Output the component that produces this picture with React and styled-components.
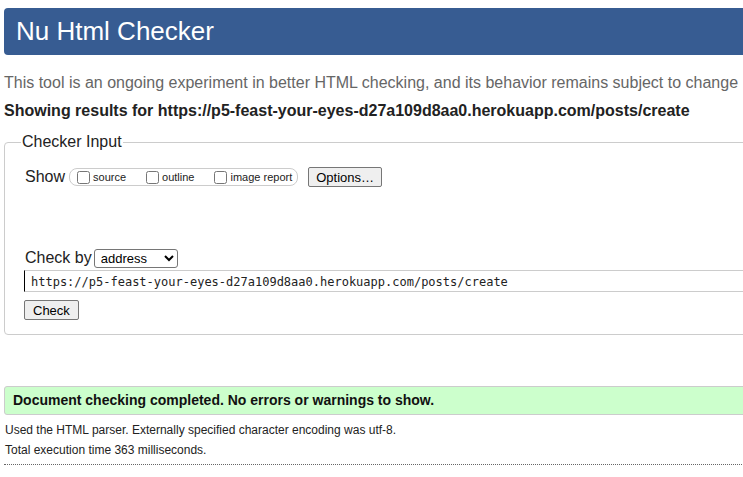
import React from "react";
import styled, { createGlobalStyle } from "styled-components";

const GlobalStyle = createGlobalStyle`
  html, body {
    margin: 0;
    padding: 0;
    overflow: hidden;
    background: #fff;
  }
  body {
    font-family: "Liberation Sans", Arial, sans-serif;
    color: #222;
  }
`;

const Page = styled.div`
  width: 1000px;
  padding: 8px 0 0 4px;
`;

const Header = styled.h1`
  margin: 0;
  height: 47px;
  line-height: 47px;
  padding-left: 12px;
  background: #375c92;
  color: #fff;
  font-size: 26px;
  font-weight: normal;
  border-radius: 4px;
`;

const Intro = styled.p`
  margin: 18px 0 0;
  font-size: 16px;
  line-height: 20px;
  color: #666;
  white-space: nowrap;
`;

const Results = styled.p`
  margin: 8px 0 0;
  font-size: 16px;
  line-height: 20px;
  font-weight: bold;
  color: #222;
  white-space: nowrap;
`;

const Fieldset = styled.fieldset`
  margin: 11px 0 0;
  padding: 14px 20px 14px 20px;
  border: 1px solid #ccc;
  border-radius: 4px;
`;

const Legend = styled.legend`
  margin-left: -4px;
  padding: 0 1px;
  font-size: 16px;
  line-height: 20px;
  color: #222;
`;

const Row = styled.div`
  display: flex;
  align-items: center;
  margin-top: ${(p) => p.top || 0}px;
  font-size: 16px;
  height: ${(p) => p.h || 22}px;
`;

const Pill = styled.span`
  display: inline-flex;
  align-items: center;
  height: 16px;
  margin-left: 4px;
  padding: 0 5px 0 7px;
  border: 1px solid #ccc;
  border-radius: 8px;
`;

const Opt = styled.label`
  display: inline-flex;
  align-items: center;
  font-size: 11px;
  margin-right: ${(p) => p.gap || 0}px;
  input {
    width: 13px;
    height: 13px;
    margin: 0 3px 0 0;
  }
`;

const Button = styled.button`
  font-family: "Liberation Sans", Arial, sans-serif;
  font-size: 13px;
  height: 20px;
  padding: 0 ${(p) => p.px || 8}px;
  color: #000;
  background: #efefef;
  border: 1px solid #767676;
  border-radius: 2px;
  margin-left: ${(p) => p.ml || 0}px;
`;

const Select = styled.select`
  margin-left: 2px;
  width: 84px;
  height: 19px;
  font-family: "Liberation Sans", Arial, sans-serif;
  font-size: 13px;
  color: #000;
  background: #fff;
  border: 1px solid #767676;
  border-radius: 3px;
  padding: 0 2px;
`;

const UrlInput = styled.input`
  display: block;
  box-sizing: border-box;
  margin: 2px 0 0 -1px;
  width: 1000px;
  height: 22px;
  padding: 1px 6px 0;
  border: 1px solid #ccc;
  border-left: 1px solid #000;
  border-right: none;
  font-family: "DejaVu Sans Mono", "Liberation Mono", monospace;
  font-size: 12px;
  color: #222;
  outline: none;
`;

const CheckRow = styled.div`
  margin: 8px 0 0 -1px;
`;

const Success = styled.div`
  margin-top: 51px;
  height: 27px;
  line-height: 27px;
  padding-left: 8px;
  background: #ccffcc;
  border: 1px solid #ccc;
  border-radius: 3px;
  font-size: 14px;
  font-weight: bold;
  color: #111;
`;

const Details = styled.div`
  margin: 5px 0 0 1px;
  font-size: 12px;
  line-height: 20px;
  color: #222;
`;

const Rule = styled.hr`
  margin: 4px 0 0;
  border: none;
  border-top: 1px dotted #666;
`;

const url = "https://p5-feast-your-eyes-d27a109d8aa0.herokuapp.com/posts/create";

export default function App() {
  return (
    <Page>
      <GlobalStyle />
      <Header>Nu Html Checker</Header>
      <Intro>
        This tool is an ongoing experiment in better HTML checking, and its behavior remains subject to change
      </Intro>
      <Results>Showing results for {url}</Results>
      <Fieldset>
        <Legend>Checker Input</Legend>
        <Row>
          Show
          <Pill>
            <Opt gap={20}>
              <input type="checkbox" />source
            </Opt>
            <Opt gap={20}>
              <input type="checkbox" />outline
            </Opt>
            <Opt>
              <input type="checkbox" />image report
            </Opt>
          </Pill>
          <Button ml={10} px={7}>Options…</Button>
        </Row>
        <Row top={60} h={20}>
          Check by
          <Select defaultValue="address">
            <option value="address">address</option>
            <option value="file">file upload</option>
            <option value="text">text input</option>
          </Select>
        </Row>
        <UrlInput defaultValue={url} />
        <CheckRow>
          <Button>Check</Button>
        </CheckRow>
      </Fieldset>
      <Success>Document checking completed. No errors or warnings to show.</Success>
      <Details>
        <div>Used the HTML parser. Externally specified character encoding was utf-8.</div>
        <div>Total execution time 363 milliseconds.</div>
      </Details>
      <Rule />
    </Page>
  );
}
